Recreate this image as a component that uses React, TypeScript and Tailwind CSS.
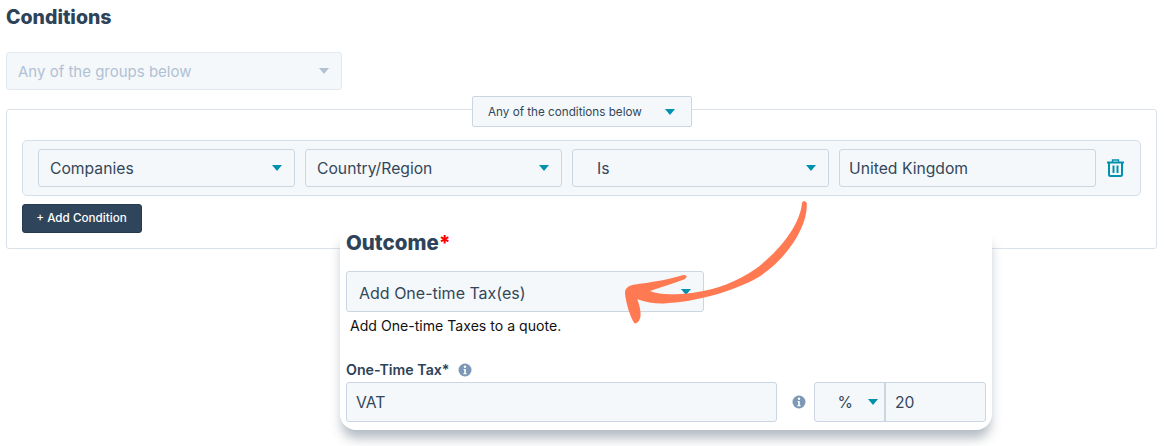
const Caret = ({ color = "border-t-[#0091ae]" }: { color?: string }) => (
  <span className={`h-0 w-0 border-x-[5.5px] border-t-[6px] border-x-transparent ${color}`} />
);

const Select = ({ label, indent = "pl-[11px]" }: { label: string; indent?: string }) => (
  <div className={`flex h-[38px] w-[257px] items-center justify-between rounded-[3px] border border-[#cbd6e2] bg-[#f5f8fa] pr-3 ${indent}`}>
    <span className="pt-[2px]">{label}</span>
    <Caret />
  </div>
);

const Info = ({ className = "" }: { className?: string }) => (
  <svg viewBox="0 0 14 14" className={`h-[14px] w-[14px] ${className}`}>
    <circle cx="7" cy="7" r="6.5" fill="#7c98b6" />
    <circle cx="7" cy="3.8" r="1.2" fill="#fff" />
    <path d="M5.6 6h2.2v4.2h.9v1H5.3v-1h.9V7h-.6z" fill="#fff" />
  </svg>
);

const Trash = () => (
  <svg viewBox="0 0 17 18" className="ml-[1px] h-[18px] w-[17px]" fill="none" stroke="#0091ae" strokeWidth="2">
    <path d="M0 3.5h17" />
    <path d="M5.5 3V1h6v2" strokeWidth="1.4" />
    <path d="M2 3.5V15.5a1.5 1.5 0 0 0 1.5 1.5h10a1.5 1.5 0 0 0 1.5-1.5V3.5" />
    <path d="M6.5 6.5v7.5M10.5 6.5v7.5" />
  </svg>
);

export default function App() {
  return (
    <div className="relative h-[446px] w-[1164px] overflow-hidden bg-white px-[6px] font-['Inter',sans-serif] text-[15.7px] text-[#33475b]">
      <h2 className="pt-[5px] text-[19.5px] leading-[24px] font-extrabold text-[#2d4359]">Conditions</h2>

      <div className="mt-[23px] flex h-[38px] w-[336px] items-center justify-between rounded-[3px] border border-[#e3e9f0] bg-[#f5f8fa] pl-[11px] pr-3 text-[15px] text-[#b0c1d4]">
        <span className="pt-[2px]">Any of the groups below</span>
        <Caret color="border-t-[#b0c1d4]" />
      </div>

      {/* conditions box */}
      <div className="relative mt-[19px] h-[140px] w-[1151px] rounded-[3px] border border-[#dbe1e8] px-[15px] pt-[30px]">
        <div className="absolute -top-[14px] left-[465px] flex h-[31px] w-[220px] items-center justify-between rounded-[2px] border border-[#cbd6e2] bg-[#f5f8fa] pl-[15px] pr-4 text-[11.7px]">
          <span className="pt-[2px]">Any of the conditions below</span>
          <Caret />
        </div>

        <div className="flex h-[56px] w-[1119px] items-center gap-[10px] rounded-[5px] border border-[#d4dfe9] bg-[#f5f8fa] pl-[15px]">
          <Select label="Companies" />
          <Select label="Country/Region" />
          <Select label="Is" indent="pl-[24px]" />
          <div className="flex h-[38px] w-[257px] items-center rounded-[3px] border border-[#cbd6e2] bg-[#f5f8fa] pl-[9px]">
            <span className="pt-[2px]">United Kingdom</span>
          </div>
          <Trash />
        </div>

        <button className="mt-[8px] flex h-[29px] w-[120px] items-center justify-center rounded-[3px] border border-[#253a4f] bg-[#2f455c] pr-[1px] text-[11.7px] font-medium text-white">
          + Add Condition
        </button>
      </div>

      {/* outcome card */}
      <div className="absolute top-[232px] left-[340px] h-[198px] w-[652px] rounded-t-[6px] rounded-b-[16px] bg-white px-[6px] shadow-[0_10px_12px_-2px_rgba(51,71,91,0.38)]">
        <h3 className="-mt-[1px] text-[20.5px] leading-[24px] font-extrabold text-[#2d4359]">
          Outcome<span className="text-[#f00]">*</span>
        </h3>
        <div className="mt-[16px] flex h-[41px] w-[358px] items-center justify-between rounded-[3px] border border-[#cbd6e2] bg-[#f5f8fa] pl-3 pr-3 text-[16px]">
          <span className="pt-[2px]">Add One-time Tax(es)</span>
          <Caret />
        </div>
        <p className="mt-[5px] ml-[4px] text-[14.1px] leading-[18px] text-[#111]">Add One-time Taxes to a quote.</p>
        <div className="mt-[26px] flex h-[18px] items-center gap-[8px] text-[14.2px] font-semibold text-[#2d4359]">
          One-Time Tax*
          <Info />
        </div>
        <div className="mt-[3px] flex h-[40px] items-center">
          <div className="flex h-full w-[431px] items-center rounded-[3px] border border-[#cbd6e2] bg-[#f5f8fa] pl-[9px]">
            <span className="pt-[2px]">VAT</span>
          </div>
          <Info className="ml-[15px]" />
          <div className="ml-[8px] flex h-full w-[172px] rounded-[3px] border border-[#cbd6e2] bg-[#f5f8fa]">
            <div className="flex w-[71px] items-center justify-end gap-[15px] border-r-2 border-[#cbd6e2] pr-[6px]">
              <span className="pt-[2px]">%</span>
              <Caret />
            </div>
            <div className="flex items-center pt-[2px] pl-[9px]">20</div>
          </div>
        </div>
      </div>

      {/* hand drawn arrow */}
      <svg viewBox="0 0 720 450" className="absolute top-[190px] left-[600px] h-[150px] w-[240px]">
        <path
          fill="#ff7a53"
          d="M606 38 Q612 28 620 38 C626 100 570 200 475 262 C400 305 290 335 200 340 C170 342 140 338 112 328 C118 345 124 365 121 382 C118 395 108 405 102 398 C90 380 78 340 75 310 C74 295 85 287 100 284 C150 278 210 268 250 255 C262 254 262 262 255 267 C225 280 185 290 150 303 C180 315 220 315 280 308 C350 300 410 275 465 238 C530 190 600 110 606 38 Z"
        />
      </svg>
    </div>
  );
}
